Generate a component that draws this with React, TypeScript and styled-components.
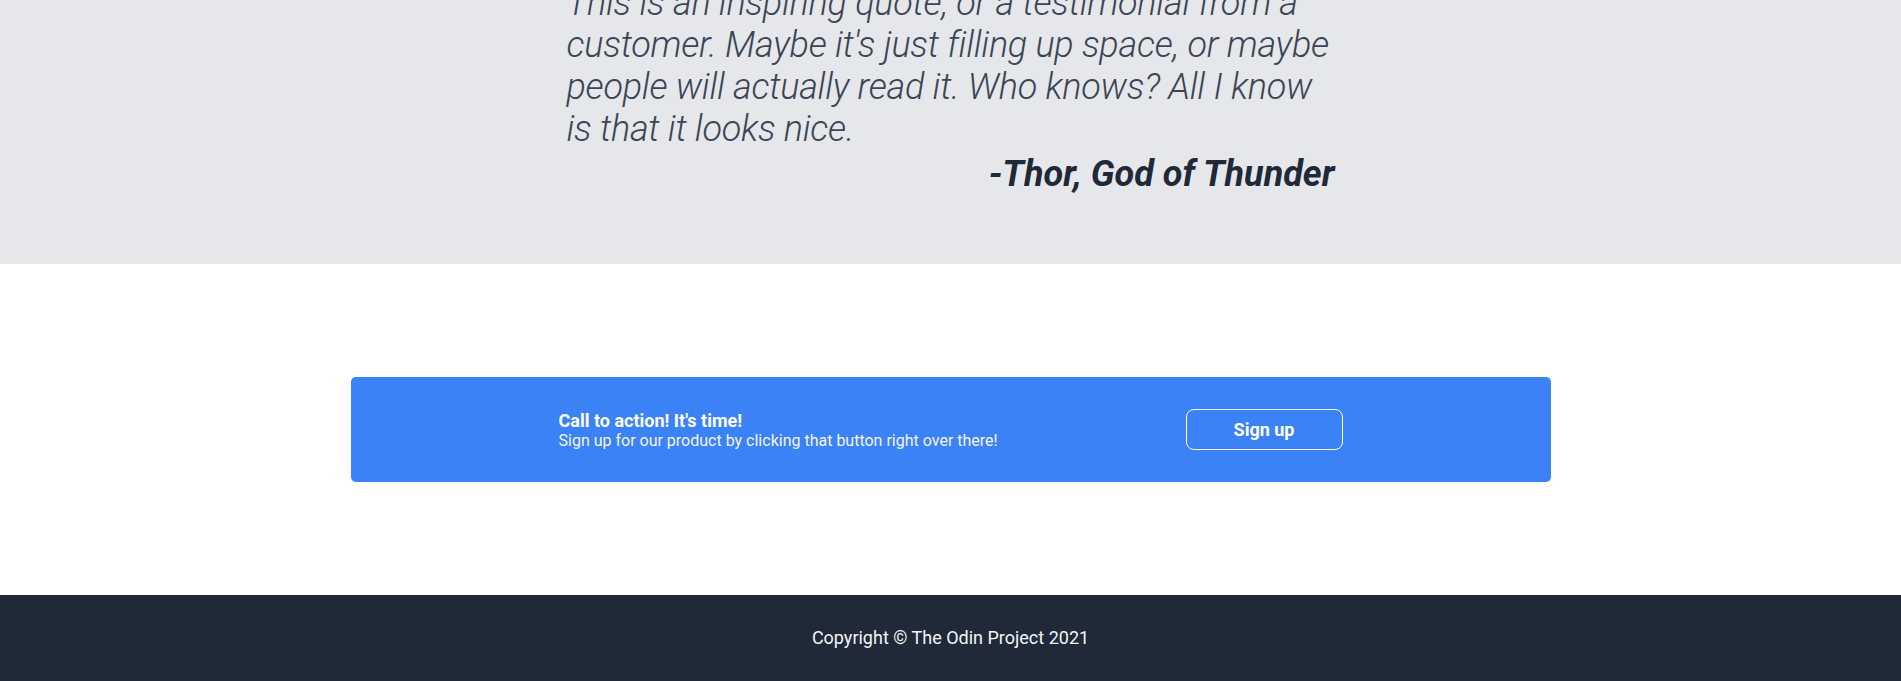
import React from "react";
import styled, { createGlobalStyle } from "styled-components";

const GlobalStyle = createGlobalStyle`
  * { box-sizing: border-box; }
  html, body { margin: 0; padding: 0; }
  body {
    font-family: Roboto, "Noto Sans", "Liberation Sans", sans-serif;
    color: #1f2937;
    background: #ffffff;
    overflow: hidden;
  }
`;

const QuoteSection = styled.section`
  background: #e5e7eb;
  padding: 0 0 69px;
`;

const QuoteBox = styled.figure`
  width: 768px;
  margin: -18px auto 0;
  display: flex;
  flex-direction: column;
`;

const QuoteText = styled.blockquote`
  margin: 0;
  font-family: Roboto, sans-serif;
  font-size: 36px;
  font-weight: 300;
  font-style: italic;
  line-height: normal;
  letter-spacing: -0.25px;
  color: #3b4554;
`;

const Author = styled.figcaption`
  margin-top: 3px;
  text-align: right;
  font-size: 36px;
  font-weight: 700;
  font-style: italic;
  line-height: normal;
  color: #1f2937;
`;

const CtaSection = styled.section`
  padding: 113px 0;
  display: flex;
  justify-content: center;
`;

const CtaCard = styled.div`
  width: 1200px;
  height: 105px;
  background: #3b82f6;
  border-radius: 5px;
  padding: 0 208px;
  display: flex;
  align-items: center;
  justify-content: space-between;
  color: #ffffff;
`;

const CtaText = styled.div`
  display: flex;
  flex-direction: column;
`;

const CtaTitle = styled.h2`
  margin: 0;
  font-size: 18px;
  font-weight: 700;
  line-height: normal;
  color: #ffffff;
`;

const CtaSub = styled.p`
  margin: 0;
  font-size: 16px;
  font-weight: 400;
  line-height: normal;
  color: #f3f4f6;
`;

const SignUpButton = styled.button`
  font-family: inherit;
  background: transparent;
  color: #ffffff;
  border: 1px solid #ffffff;
  border-radius: 8px;
  padding: 8px 47px;
  font-size: 18px;
  font-weight: 700;
  line-height: 23px;
  cursor: pointer;
`;

const Footer = styled.footer`
  background: #1f2937;
  padding: 32px 0;
  text-align: center;
  color: #f3f4f6;
  font-size: 18px;
  line-height: 22px;
`;

export default function App() {
  return (
    <>
      <GlobalStyle />
      <QuoteSection>
        <QuoteBox>
          <QuoteText>
            This is an inspiring quote, or a testimonial from a customer. Maybe
            it's just filling up space, or maybe people will actually read it.
            Who knows? All I know is that it looks nice.
          </QuoteText>
          <Author>-Thor, God of Thunder</Author>
        </QuoteBox>
      </QuoteSection>
      <CtaSection>
        <CtaCard>
          <CtaText>
            <CtaTitle>Call to action! It's time!</CtaTitle>
            <CtaSub>
              Sign up for our product by clicking that button right over there!
            </CtaSub>
          </CtaText>
          <SignUpButton>Sign up</SignUpButton>
        </CtaCard>
      </CtaSection>
      <Footer>Copyright © The Odin Project 2021</Footer>
    </>
  );
}
